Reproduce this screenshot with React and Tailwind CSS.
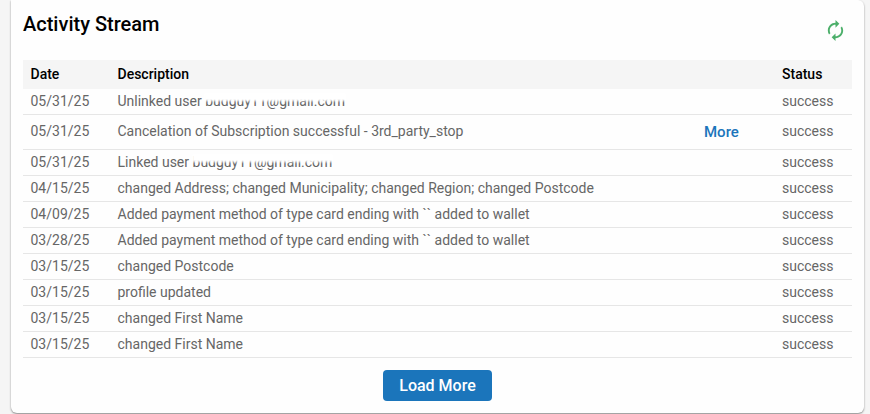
import React from 'react';
import { MdAutorenew } from 'react-icons/md';

const rows = [
    { date: '05/31/25', text: 'Unlinked user ', email: 'budguy11@gmail.com' },
    { date: '05/31/25', text: 'Cancelation of Subscription successful - 3rd_party_stop', more: true },
    { date: '05/31/25', text: 'Linked user ', email: 'budguy11@gmail.com' },
    { date: '04/15/25', text: 'changed Address; changed Municipality; changed Region; changed Postcode' },
    { date: '04/09/25', text: 'Added payment method of type card ending with `` added to wallet' },
    { date: '03/28/25', text: 'Added payment method of type card ending with `` added to wallet' },
    { date: '03/15/25', text: 'changed Postcode' },
    { date: '03/15/25', text: 'profile updated' },
    { date: '03/15/25', text: 'changed First Name' },
    { date: '03/15/25', text: 'changed First Name' },
];

const Row = ({ row }) => (
    <div className={`flex items-center border-b border-[#e6e6e6] pl-[7.5px] text-[14px] text-[#666666] ${row.more ? 'h-[35px] pb-[2px]' : 'h-[26px]'}`}>
        <div className="w-[87px] shrink-0">{row.date}</div>
        <div className="flex-1 whitespace-pre">
            {row.text}
            {row.email && (
                <span className="relative inline-block">
                    {row.email}
                    <span className="absolute -left-[1px] -right-[1px] top-[2px] h-[8px] bg-white blur-[1px]" />
                </span>
            )}
        </div>
        {row.more && <div className="mt-[2px] w-[78px] shrink-0 text-[15px] font-medium text-[#1b75bb]">More</div>}
        <div className="w-[70px] shrink-0">success</div>
    </div>
);

export default function App() {
    return (
        <div className="h-[414px] w-[870px] overflow-hidden bg-[#f5f5f5] pl-[11px] pr-[6px] pb-[1px] font-['Roboto',sans-serif]">
            <div className="h-[413px] rounded-b-[6px] rounded-tr-[6px] bg-[#fefefe] px-[12px] pt-[12px] shadow-[0_1px_2px_rgba(0,0,0,0.45)]">
                <div className="flex h-[48px] items-start justify-between">
                    <h2 className="text-[20px] font-medium leading-[24px] text-black">Activity Stream</h2>
                    <MdAutorenew className="mr-[5px] mt-[7px] h-[23px] w-[23px] text-[#4caf6a]" />
                </div>
                <div className="flex h-[29px] items-center bg-[#f5f5f5] pl-[7.5px] pb-[1px] text-[14px] font-medium text-black">
                    <div className="w-[87px] shrink-0">Date</div>
                    <div className="flex-1">Description</div>
                    <div className="w-[70px] shrink-0">Status</div>
                </div>
                {rows.map((row, i) => (
                    <Row key={i} row={row} />
                ))}
                <div className="mt-[12px] flex justify-center">
                    <button className="h-[31px] w-[109px] rounded-[4px] bg-[#1b75bb] text-[16px] font-medium text-white">
                        Load More
                    </button>
                </div>
            </div>
        </div>
    );
}
